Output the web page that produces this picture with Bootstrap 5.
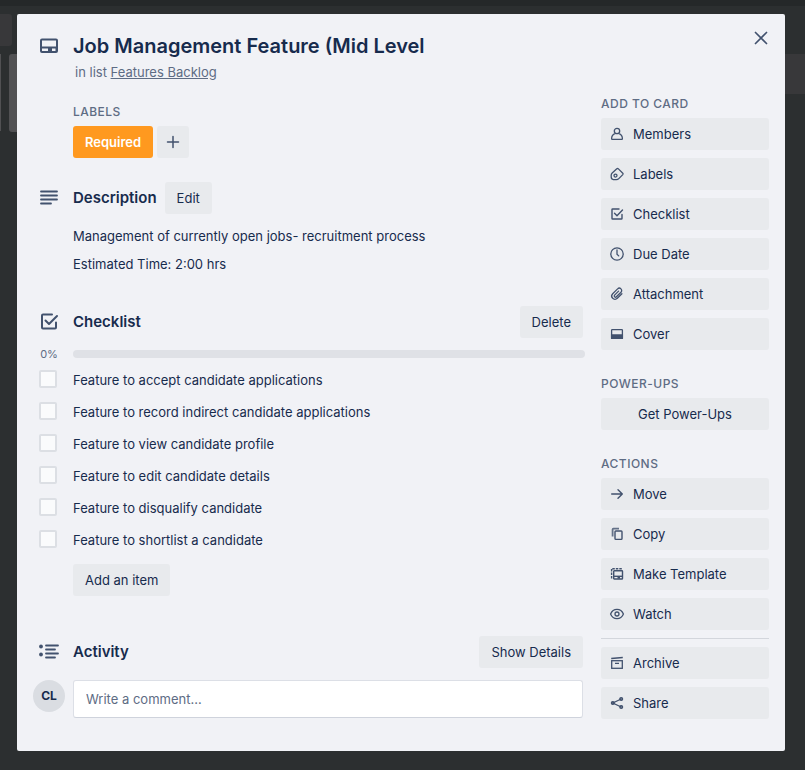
<!DOCTYPE html>
<html lang="en">
<head>
<meta charset="utf-8">
<meta name="viewport" content="width=device-width, initial-scale=1">
<title>Job Management Feature (Mid Level</title>
<link href="https://cdn.jsdelivr.net/npm/bootstrap@5.3.0/dist/css/bootstrap.min.css" rel="stylesheet">
<style>
  body { font-family: Inter, "Liberation Sans", sans-serif; font-size: 13px; line-height: 20px; color: #172b4d; background: #2c2f30; }
  .board { position: absolute; inset: 0; overflow: hidden; }
  .board div { position: absolute; }
  .board .topbar { left: 0; right: 0; top: 0; height: 6px; background: #252829; }
  .board .tool { left: 0; top: 14px; width: 12px; height: 32px; background: #38383a; border-radius: 0 3px 3px 0; }
  .board .list-a { left: 0; top: 54px; width: 1px; height: 77px; background: #515153; }
  .board .list-b { left: 9px; top: 54px; width: 40px; height: 78px; background: #515153; border-radius: 3px; }
  .board .list-c { right: 0; top: 54px; width: 40px; height: 40px; background: #38383a; }
  .stage { position: relative; padding: 14px 20px 19px 17px; }
  .card-window { background: #f1f2f6; border-radius: 2px; padding: 16px 16px 32px; }
  .gutter { flex: 0 0 40px; color: #42526e; }
  .gutter svg { display: block; }
  .gutter-icon { padding-left: 6px; }
  h1 { font-size: 20px; line-height: 32px; font-weight: 600; margin: 0; }
  h2 { font-size: 15px; line-height: 32px; font-weight: 600; margin: 0; }
  h3 { font-size: 12px; line-height: 20px; font-weight: 500; margin: 0 0 4px; color: #5e6c84; text-transform: uppercase; letter-spacing: .04em; }
  .sublist { color: #5e6c84; padding-left: 42px; }
  .sublist a { color: inherit; }
  .body-cols { gap: 16px; padding-top: 12px; }
  .side { flex: 0 0 168px; }
  .soft { --bs-btn-font-size: 13px; --bs-btn-line-height: 20px; --bs-btn-padding-y: 6px; --bs-btn-padding-x: 12px; --bs-btn-border-radius: 3px; --bs-btn-border-width: 0; --bs-btn-bg: #e8eaed; --bs-btn-color: #172b4d; --bs-btn-hover-bg: #dfe1e6; --bs-btn-hover-color: #172b4d; --bs-btn-active-bg: #dfe1e6; }
  .soft-side { --bs-btn-padding-x: 8px; display: flex; align-items: center; gap: 8px; width: 100%; text-align: left; }
  .soft-side svg, .plus svg { color: #42526e; flex: none; }
  .plus { --bs-btn-padding-x: 8px; line-height: 0; }
  .tag { --bs-btn-bg: #ff991f; --bs-btn-color: #fff; --bs-btn-hover-bg: #f28f17; --bs-btn-hover-color: #fff; --bs-btn-font-weight: 600; }
  .close-x { color: #42526e; line-height: 0; }
  .pad-end { padding-right: 2px; }
  .label-row { padding-top: 8px; }
  .section-gap { margin-top: 32px; }
  .meter { --bs-progress-height: 8px; --bs-progress-bg: #dfe1e6; --bs-progress-border-radius: 4px; }
  .pct { font-size: 11px; line-height: 16px; color: #5e6c84; text-align: center; flex: 0 0 32px; margin-right: 8px; }
  .todos { padding-top: 2px; }
  .todo { height: 32px; }
  .todo .form-check-input { width: 18px; height: 18px; margin: 0 16px 2px 6px; border: 2px solid #dcdfe4; border-radius: 2px; background-color: #fafbfc; }
  .avatar { width: 32px; height: 32px; border-radius: 50%; background: #dadde2; color: #172b4d; font-size: 12px; line-height: 32px; font-weight: 700; text-align: center; }
  .comment { font-size: 13px; line-height: 20px; padding: 8px 12px; border: 1px solid #dcdfe6; border-bottom-color: #cfd3dc; border-radius: 3px; background: #fff; }
  .comment::placeholder { color: #5e6c84; }
  .rule { height: 1px; background: #d3d6dc; margin: 0; border: 0; opacity: 1; }
</style>
</head>
<body>
<div class="board" aria-hidden="true">
  <div class="topbar"></div><div class="tool"></div><div class="list-a"></div><div class="list-b"></div><div class="list-c"></div>
</div>
<div class="stage">
  <main class="card-window" role="dialog" aria-labelledby="title">
    <header>
      <div class="d-flex align-items-center">
        <div class="gutter gutter-icon"><svg width="20" height="20" viewBox="0 0 20 20" fill="none" stroke="currentColor" stroke-width="2"><rect x="2" y="3.500" width="16" height="12.500" rx="1"/><path d="M2 11.500H18" stroke-width="2"/><path d="M9 13.500h4" stroke-width="3"/><path d="M17 12v3" stroke-width="1"/></svg></div>
        <h1 id="title" class="flex-fill">Job Management Feature (Mid Level</h1>
        <button class="btn p-0 border-0 close-x mb-3" type="button" aria-label="Close"><svg width="16" height="16" viewBox="0 0 16 16" fill="none" stroke="currentColor" stroke-width="1.700" stroke-linecap="round"><path d="M2.500 2.500l11 11M13.500 2.500l-11 11"/></svg></button>
      </div>
      <div class="sublist">in list <a href="#">Features Backlog</a></div>
    </header>
    <div class="body-cols d-flex">
      <div class="flex-fill">
        <section class="label-row d-flex">
          <div class="gutter"></div>
          <div>
            <h3>Labels</h3>
            <div class="d-flex gap-1">
              <button class="btn soft tag" type="button">Required</button>
              <button class="btn soft plus" type="button" aria-label="Add label"><svg width="16" height="16" viewBox="0 0 16 16" fill="none" stroke="currentColor" stroke-width="1.500" stroke-linecap="round"><path d="M8 2.500v11M2.500 8h11"/></svg></button>
            </div>
          </div>
        </section>
        <section class="mt-4">
          <div class="d-flex align-items-center">
            <div class="gutter gutter-icon"><svg width="20" height="20" viewBox="0 0 20 20" fill="none" stroke="currentColor" stroke-width="1.800" stroke-linecap="round"><path d="M2 3.500h16M2 7.500h16M2 11.500h16M2 15.500h10"/></svg></div>
            <h2>Description</h2>
            <button class="btn soft ms-2" type="button">Edit</button>
          </div>
          <div class="d-flex">
            <div class="gutter"></div>
            <div class="pt-2 mt-1">
              <p class="mb-2">Management of currently open jobs- recruitment process</p>
              <p class="mb-0">Estimated Time: 2:00 hrs</p>
            </div>
          </div>
        </section>
        <section class="section-gap">
          <div class="d-flex align-items-center pad-end">
            <div class="gutter gutter-icon"><svg width="20" height="20" viewBox="0 0 20 20" fill="none" stroke="currentColor" stroke-width="2" stroke-linecap="round" stroke-linejoin="round"><path d="M13 2.500H4a1 1 0 0 0-1 1v12a1 1 0 0 0 1 1h12a1 1 0 0 0 1-1v-5"/><path d="M6.500 8.500l3.500 3.500L18 4"/></svg></div>
            <h2 class="flex-fill">Checklist</h2>
            <button class="btn soft" type="button">Delete</button>
          </div>
          <div class="d-flex align-items-center pt-2">
            <div class="pct">0%</div>
            <div class="progress meter flex-fill" role="progressbar" aria-label="Checklist progress" aria-valuenow="0" aria-valuemin="0" aria-valuemax="100"><div class="progress-bar w-0"></div></div>
          </div>
          <div class="todos">
            <div class="todo d-flex align-items-center"><input class="form-check-input" type="checkbox" id="t1"><label for="t1">Feature to accept candidate applications</label></div>
            <div class="todo d-flex align-items-center"><input class="form-check-input" type="checkbox" id="t2"><label for="t2">Feature to record indirect candidate applications</label></div>
            <div class="todo d-flex align-items-center"><input class="form-check-input" type="checkbox" id="t3"><label for="t3">Feature to view candidate profile</label></div>
            <div class="todo d-flex align-items-center"><input class="form-check-input" type="checkbox" id="t4"><label for="t4">Feature to edit candidate details</label></div>
            <div class="todo d-flex align-items-center"><input class="form-check-input" type="checkbox" id="t5"><label for="t5">Feature to disqualify candidate</label></div>
            <div class="todo d-flex align-items-center"><input class="form-check-input" type="checkbox" id="t6"><label for="t6">Feature to shortlist a candidate</label></div>
          </div>
          <div class="d-flex pt-2">
            <div class="gutter"></div>
            <button class="btn soft" type="button">Add an item</button>
          </div>
        </section>
        <section class="mt-3 pt-4">
          <div class="d-flex align-items-center pad-end">
            <div class="gutter gutter-icon"><svg width="20" height="20" viewBox="0 0 20 20" fill="none" stroke="currentColor" stroke-width="1.800" stroke-linecap="round"><path d="M7 3.500h12M7 7.500h9M7 11.500h12M7 15.500h9"/><circle cx="2" cy="4.500" r="1.900" fill="currentColor" stroke="none"/><circle cx="2" cy="12.500" r="1.900" fill="currentColor" stroke="none"/></svg></div>
            <h2 class="flex-fill">Activity</h2>
            <button class="btn soft" type="button">Show Details</button>
          </div>
          <div class="d-flex pad-end pt-2 mt-1">
            <div class="gutter"><div class="avatar">CL</div></div>
            <input class="form-control comment" type="text" placeholder="Write a comment…" aria-label="Write a comment">
          </div>
        </section>
      </div>
      <aside class="side">
        <h3>Add to card</h3>
        <div class="d-grid gap-2">
          <button class="btn soft soft-side" type="button"><svg width="16" height="16" viewBox="0 0 16 16" fill="none" stroke="currentColor" stroke-width="1.300" stroke-linejoin="round"><circle cx="8" cy="5" r="2.700"/><path d="M5.800 7.600C3.600 8.600 2.600 10.400 2.600 12.800q0 .6.600.600h9.600q.6 0 .6-.6c0-2.400-1-4.200-3.200-5.200"/></svg>Members</button>
          <button class="btn soft soft-side" type="button"><svg width="16" height="16" viewBox="0 0 16 16" fill="none" stroke="currentColor" stroke-width="1.300" stroke-linejoin="round"><path d="M7.800 2.800q.9-.6 1.600.1L13.800 7.200q.6.700 0 1.400L9.800 12.600Q8.800 13.600 7.400 13.600H4.400Q2.200 13.200 2.200 11V9.200Q2.200 8 3.200 7z"/><circle cx="6.500" cy="9.600" r="1.500"/></svg>Labels</button>
          <button class="btn soft soft-side" type="button"><svg width="16" height="16" viewBox="0 0 16 16" fill="none" stroke="currentColor" stroke-width="1.400" stroke-linecap="round" stroke-linejoin="round"><path d="M10 3H3.600a.6.600 0 0 0-.6.600v8.800a.6.600 0 0 0 .6.600h8.800a.6.600 0 0 0 .6-.6V8.500"/><path d="M5.500 7.200L8 9.700l5.500-5.700"/></svg>Checklist</button>
          <button class="btn soft soft-side" type="button"><svg width="16" height="16" viewBox="0 0 16 16" fill="none" stroke="currentColor" stroke-width="1.300" stroke-linecap="round"><circle cx="8" cy="8" r="6.200"/><path d="M8 4v4.200l1.700 1.700"/></svg>Due Date</button>
          <button class="btn soft soft-side" type="button"><svg width="16" height="16" viewBox="0 0 16 16" fill="none" stroke="currentColor" stroke-width="1.300" stroke-linecap="round"><path d="M12.900 7.700L8.300 12.300a3.200 3.200 0 0 1-4.600-4.600l4.900-4.800a2.300 2.300 0 0 1 3.400 3.300L7.400 10.800a1.200 1.200 0 0 1-1.800-1.700l4-4"/></svg>Attachment</button>
          <button class="btn soft soft-side" type="button"><svg width="16" height="16" viewBox="0 0 16 16" fill="none" stroke="currentColor" stroke-width="1.300"><rect x="2.600" y="3.600" width="10.800" height="8.800" rx=".6"/><path d="M2.600 9h10.800v3.400H2.600z" fill="currentColor"/></svg>Cover</button>
        </div>
        <h3 class="mt-4">Power-Ups</h3>
        <button class="btn soft w-100" type="button">Get Power-Ups</button>
        <h3 class="mt-4">Actions</h3>
        <div class="d-grid gap-2">
          <button class="btn soft soft-side" type="button"><svg width="16" height="16" viewBox="0 0 16 16" fill="none" stroke="currentColor" stroke-width="1.400" stroke-linecap="round" stroke-linejoin="round"><path d="M2.700 8h10.600M9 3.700L13.300 8 9 12.300"/></svg>Move</button>
          <button class="btn soft soft-side" type="button"><svg width="16" height="16" viewBox="0 0 16 16" fill="none" stroke="currentColor" stroke-width="1.400" stroke-linejoin="round"><path d="M10 2.700H4.400q-.8 0-.8.800V10.500" stroke-width="1.800" stroke-opacity=".8"/><rect x="6" y="5" width="7" height="8.400" rx=".8"/></svg>Copy</button>
          <button class="btn soft soft-side" type="button"><svg width="16" height="16" viewBox="0 0 16 16" fill="none" stroke="currentColor" stroke-width="1.400"><rect x="4.700" y="4.700" width="8.800" height="8.300" rx=".6"/><path d="M4.700 10.300h8.800"/><path d="M8.500 11.700h2.500" stroke-width="2"/><path d="M2.600 12.500v-9.800H13.500" stroke-dasharray="2.500 1"/></svg>Make Template</button>
          <button class="btn soft soft-side" type="button"><svg width="16" height="16" viewBox="0 0 16 16" fill="none" stroke="currentColor" stroke-width="1.300"><path d="M1.600 8C2.800 5 5.300 3.300 8 3.300S13.200 5 14.400 8C13.200 11 10.700 12.700 8 12.700S2.800 11 1.600 8z"/><circle cx="8" cy="8" r="2"/></svg>Watch</button>
          <hr class="rule">
          <button class="btn soft soft-side" type="button"><svg width="16" height="16" viewBox="0 0 16 16" fill="none" stroke="currentColor" stroke-width="1.300"><rect x="2.700" y="5.700" width="10.600" height="7.600"/><path d="M2.200 3.500L13.800 2.500M6 8.300h4"/></svg>Archive</button>
          <button class="btn soft soft-side" type="button"><svg width="16" height="16" viewBox="0 0 16 16" fill="none" stroke="currentColor" stroke-width="1.300"><path d="M12.200 4L3.800 8l8.400 4"/><g fill="currentColor" fill-opacity=".6"><circle cx="12.200" cy="4" r="1.400"/><circle cx="3.800" cy="8" r="1.400"/><circle cx="12.200" cy="12" r="1.400"/></g></svg>Share</button>
        </div>
      </aside>
    </div>
  </main>
</div>
<script src="https://cdn.jsdelivr.net/npm/bootstrap@5.3.0/dist/js/bootstrap.bundle.min.js"></script>
</body>
</html>
